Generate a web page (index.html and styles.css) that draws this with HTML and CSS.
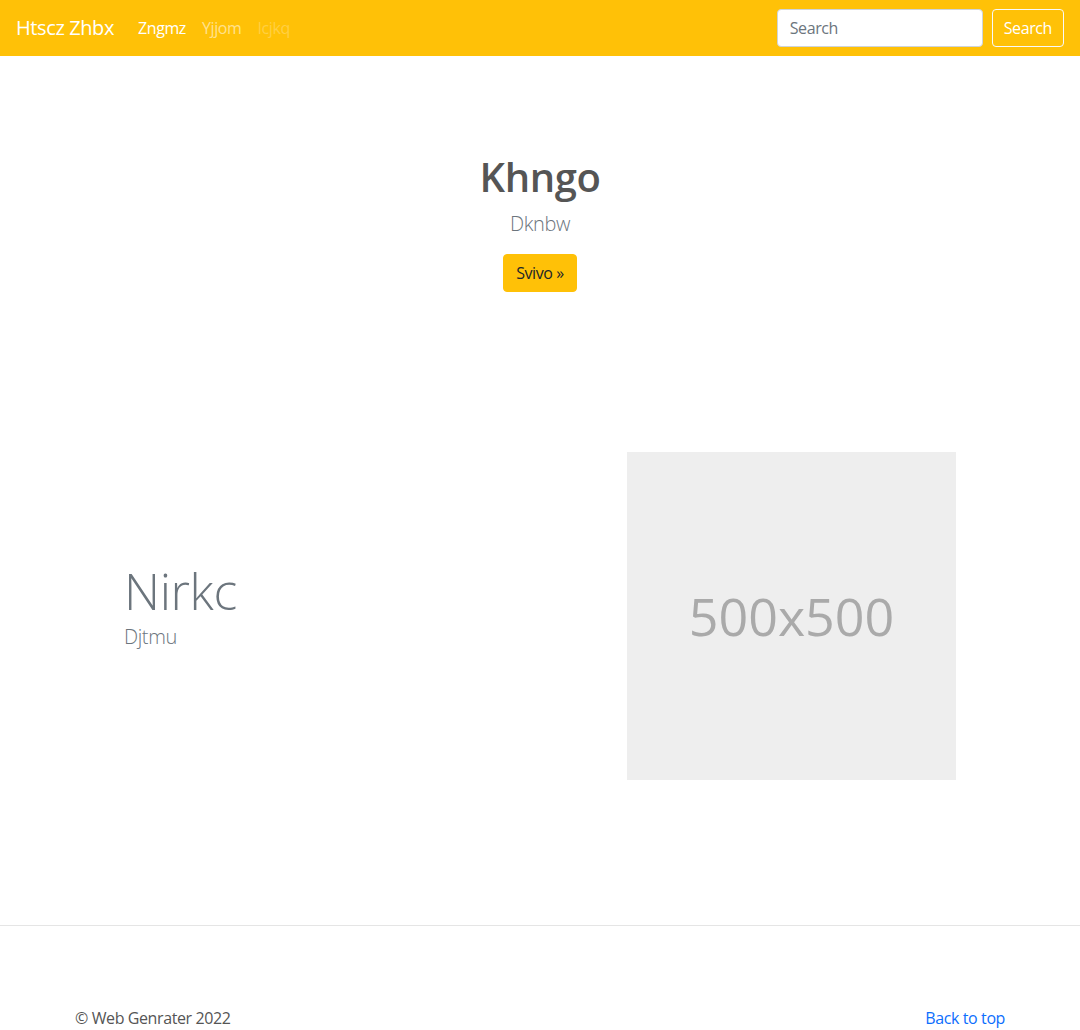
FILE: index.html
```html
<!DOCTYPE html>
<html lang="en">
<head>
<meta charset="utf-8">
<title>Htscz Zhbx</title>
<link rel="stylesheet" href="styles.css">
</head>
<body>
<header class="navbar">
  <a class="brand" href="#">Htscz Zhbx</a>
  <nav class="nav">
    <a class="nav-link active" href="#">Zngmz</a>
    <a class="nav-link" href="#">Yjjom</a>
    <a class="nav-link disabled" href="#">Icjkq</a>
  </nav>
  <form class="search">
    <input class="search-input" type="search" placeholder="Search">
    <button class="search-btn" type="button">Search</button>
  </form>
</header>
<main>
  <section class="hero">
    <h1 class="hero-title">Khngo</h1>
    <p class="hero-lead">Dknbw</p>
    <a class="hero-btn" href="#">Svivo »</a>
  </section>
  <section class="feature">
    <div class="feature-text">
      <h2 class="feature-title">Nirkc</h2>
      <p class="feature-lead">Djtmu</p>
    </div>
    <div class="placeholder"><span>500x500</span></div>
  </section>
</main>
<footer class="footer">
  <p class="copy">© Web Genrater 2022</p>
  <a class="back" href="#">Back to top</a>
</footer>
</body>
</html>
```
FILE: styles.css
```css
* { box-sizing: border-box; }
body {
  margin: 0;
  font-family: "Open Sans", "Noto Sans", sans-serif;
  font-size: 16px;
  line-height: 1.5;
  letter-spacing: -0.025em;
  color: #212529;
  background: #fff;
}
a { text-decoration: none; }
.navbar {
  height: 56px;
  background: #ffc107;
  display: flex;
  align-items: center;
  padding: 0 16px;
}
.brand {
  color: #fff;
  font-size: 20px;
  margin-right: 16px;
}
.nav { display: flex; }
.nav-link {
  padding: 8px;
  color: rgba(255,255,255,.55);
}
.nav-link.active { color: #fff; }
.nav-link.disabled { color: rgba(255,255,255,.25); }
.search {
  margin-left: auto;
  display: flex;
  gap: 9px;
}
.search-input {
  width: 206px;
  height: 38px;
  border: 1px solid #ced4da;
  border-radius: 4px;
  padding: 6px 12px;
  font: inherit;
  letter-spacing: inherit;
  color: #495057;
}
.search-input::placeholder { color: #6c757d; }
.search-btn {
  height: 38px;
  padding: 6px 11px;
  font: inherit;
  letter-spacing: inherit;
  color: #fff;
  background: transparent;
  border: 1px solid #f8f9fa;
  border-radius: 4px;
}
.hero {
  text-align: center;
  padding-top: 97px;
}
.hero-title {
  margin: 0;
  font-size: 40px;
  font-weight: 600;
  line-height: 1.2;
  color: #555;
}
.hero-lead {
  margin: 8px 0 15px;
  font-size: 20px;
  font-weight: 300;
  color: #6c757d;
}
.hero-btn {
  display: inline-block;
  padding: 6px 12px;
  border: 1px solid #ffc107;
  background: #ffc107;
  color: #212529;
  border-radius: 4px;
}
.feature {
  display: flex;
  align-items: center;
  padding: 0 124px;
  margin-top: 160px;
}
.feature-text {
  flex: 1;
  padding-bottom: 21px;
}
.feature-title {
  margin: 0;
  font-size: 50px;
  font-weight: 300;
  line-height: 1.2;
  color: #6c757d;
}
.feature-lead {
  margin: 3px 0 0;
  font-size: 20px;
  font-weight: 300;
  line-height: 1.3;
  color: #6c757d;
}
.placeholder {
  width: 329px;
  height: 328px;
  background: #eee;
  display: flex;
  align-items: center;
  justify-content: center;
  color: #aaa;
  font-size: 52px;
  letter-spacing: 0;
}
.footer {
  margin-top: 145px;
  border-top: 1px solid #e5e5e5;
  display: flex;
  justify-content: space-between;
  align-items: flex-end;
  padding: 80px 75px 0;
}
.copy {
  margin: 0;
  color: #555;
}
.back { color: #0d6efd; }
```
